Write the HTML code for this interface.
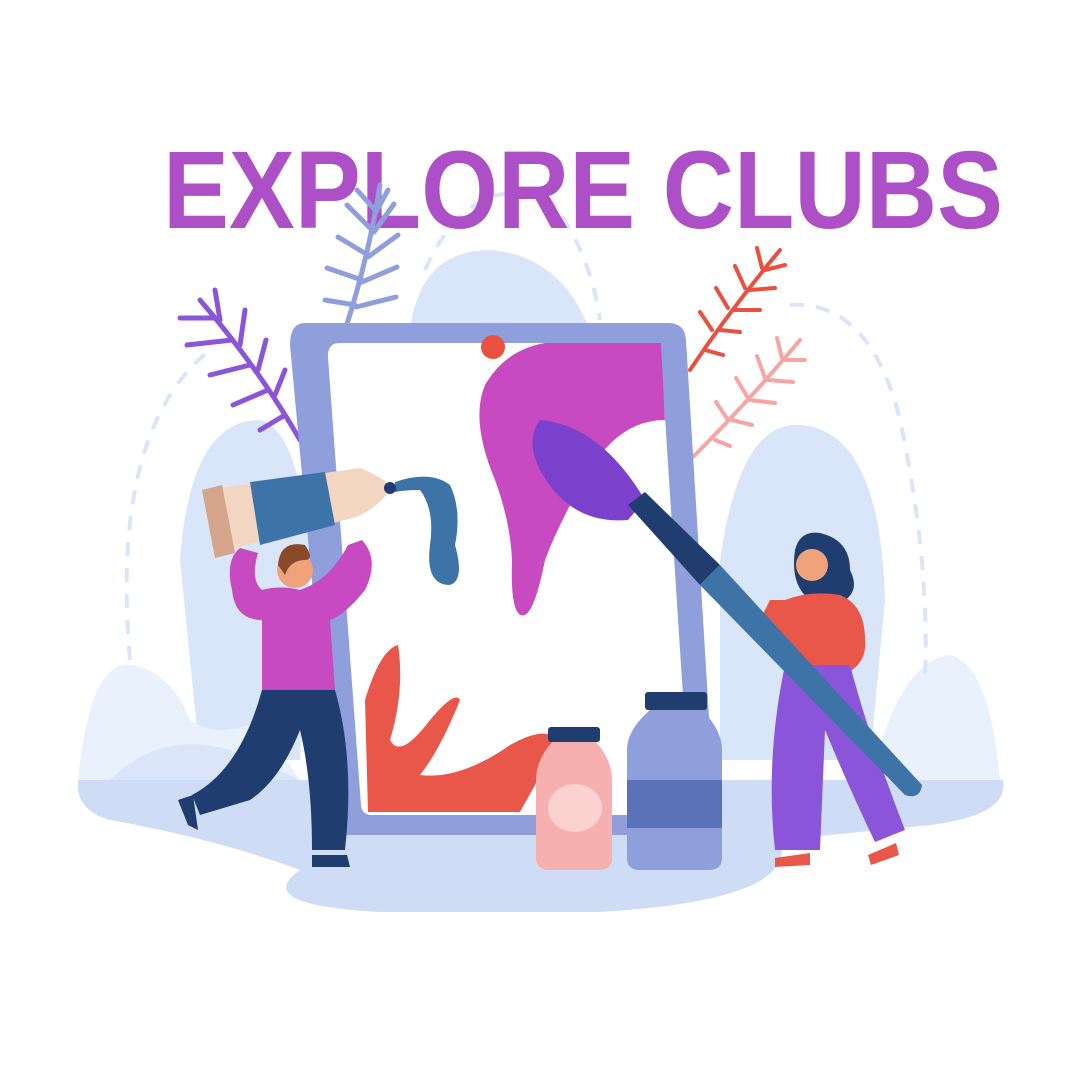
<!DOCTYPE html>
<html><head><meta charset="utf-8"><style>html,body{margin:0;padding:0;background:#fff}svg{display:block}</style></head>
<body>
<svg width="1080" height="1080" viewBox="0 0 1080 1080" xmlns="http://www.w3.org/2000/svg">
<rect width="1080" height="1080" fill="#fff"/>
<!-- background hills -->
<path d="M410 330 Q420 250 490 250 Q560 255 590 330 Z" fill="#d9e6fa"/>
<path d="M180 560 Q190 420 260 420 Q300 430 310 560 L300 760 L200 760 Z" fill="#d9e6fa"/>
<path d="M720 560 Q740 420 800 425 Q880 430 885 600 L870 760 L720 760 Z" fill="#d9e6fa"/>
<path d="M78 780 Q90 660 130 665 Q170 670 190 720 Q220 740 260 720 L300 780 Z" fill="#e9f1fc"/>
<path d="M870 780 Q900 660 950 655 Q990 665 1000 780 Z" fill="#e9f1fc"/>
<path d="M110 780 Q160 730 230 750 Q280 770 300 780 Z" fill="#dbe5f9"/>
<!-- dashed arcs -->
<path d="M130 660 Q110 430 210 350" fill="none" stroke="#dbe5f9" stroke-width="4" stroke-dasharray="14 12"/>
<path d="M425 270 Q470 170 550 200 Q590 250 600 320" fill="none" stroke="#dbe5f9" stroke-width="4" stroke-dasharray="14 12"/>
<path d="M790 305 Q870 300 900 420 Q930 560 925 680" fill="none" stroke="#dbe5f9" stroke-width="4" stroke-dasharray="14 12"/>
<!-- ground -->
<path d="M78 780 L1003 780 Q1010 815 930 825 L780 840 Q800 900 600 912 L380 912 Q250 905 300 870 Q220 840 110 820 Q75 810 78 780 Z" fill="#cfdcf6"/>
<text x="583" y="228" text-anchor="middle" textLength="840" lengthAdjust="spacingAndGlyphs" font-family="Liberation Sans, sans-serif" font-weight="bold" font-size="110" fill="#ad4fc6">EXPLORE CLUBS</text>
<!-- leaves -->
<g stroke="#8e9fdc" stroke-width="5" fill="none" stroke-linecap="round">
<path d="M380 185 Q368 260 345 330"/>
<path d="M375 210 l-18 -20 M372 230 l-25 -25 M368 255 l-30 -18 M362 280 l-35 -12 M355 305 l-30 -5 M376 212 l12 -22 M374 232 l20 -28 M368 257 l30 -22 M362 282 l35 -15 M356 307 l40 -10"/>
</g>
<g stroke="#8a55d8" stroke-width="5" fill="none" stroke-linecap="round">
<path d="M200 300 Q260 370 300 440"/>
<path d="M215 318 l-35 0 M232 340 l-45 5 M250 365 l-40 10 M268 390 l-35 15 M285 415 l-25 15 M220 320 l-5 -30 M240 345 l5 -35 M258 370 l8 -30 M275 395 l10 -25"/>
</g>
<g stroke="#e8503f" stroke-width="4" fill="none" stroke-linecap="round">
<path d="M780 250 Q730 310 690 370"/>
<path d="M765 270 l20 -5 M750 290 l25 -2 M735 310 l25 0 M720 330 l20 2 M705 350 l18 5 M762 268 l-5 -20 M745 288 l-10 -22 M728 308 l-12 -20 M712 330 l-12 -18"/>
</g>
<g stroke="#f6a5a5" stroke-width="4" fill="none" stroke-linecap="round">
<path d="M800 340 Q750 400 690 460"/>
<path d="M785 360 l20 0 M768 380 l25 2 M750 400 l25 3 M732 420 l20 5 M715 440 l15 6 M782 358 l-5 -20 M765 378 l-8 -22 M748 398 l-12 -20 M728 420 l-12 -18"/>
</g>
<!-- tablet -->
<path d="M305 323 L668 323 Q685 323 686 340 L715 815 Q716 835 698 835 L350 835 Q335 835 334 820 L290 345 Q290 323 305 323 Z" fill="#8e9fdc"/>
<path d="M340 343 L648 343 Q660 343 661 355 L690 805 Q690 815 680 815 L372 815 Q362 815 361 805 L328 358 Q327 343 340 343 Z" fill="#fff"/>
<circle cx="493" cy="347" r="12" fill="#e8503f"/>
<path d="M545 343 L661 343 L665 420 Q620 420 590 470 Q560 520 545 560 Q535 610 525 615 Q510 620 512 560 Q510 520 495 480 Q470 420 485 385 Q505 350 545 343 Z" fill="#c74ac0"/>
<path d="M365 700 Q380 650 398 645 Q405 690 390 740 Q400 760 430 720 Q455 690 460 700 Q440 750 420 775 Q460 780 510 745 Q545 725 560 740 L520 812 L368 812 Z" fill="#e8574a"/>
<path d="M395 482 Q430 470 450 485 Q462 510 455 545 Q465 580 450 585 Q425 585 430 545 Q435 510 420 490 Q405 490 395 492 Z" fill="#3e73a8"/>
<path d="M205 490 L360 468 Q385 478 392 488 Q372 515 345 520 L215 553 Z" fill="#f3d6c2"/>
<path d="M250 482 L325 472 L335 525 L260 545 Z" fill="#3e73a8"/>
<path d="M202 490 L222 485 L235 553 L215 558 Z" fill="#d4a58a"/>
<circle cx="390" cy="488" r="6" fill="#1f3d6e"/>
<!-- man -->
<path d="M232 590 Q225 560 240 548 L258 553 Q250 580 262 590 Q280 585 300 590 Q330 580 348 545 L362 540 Q380 560 365 590 Q345 615 330 620 L335 690 L262 690 L262 620 Q235 620 232 590 Z" fill="#c74ac0"/>
<path d="M262 690 L335 690 Q355 760 345 850 L312 850 Q312 780 300 730 Q280 780 250 800 L200 815 L192 795 Q240 770 262 690 Z" fill="#1f3d6e"/>
<path d="M178 800 l15 -5 l5 35 l-10 -5 Z M312 855 l35 0 l3 12 l-38 0 Z" fill="#1f3d6e"/>
<circle cx="295" cy="570" r="18" fill="#f0a37a"/>
<path d="M278 565 Q280 540 305 545 Q315 560 305 560 Q290 560 285 575 Z" fill="#8a4a2a"/>
<!-- jars -->
<rect x="548" y="727" width="52" height="15" rx="3" fill="#1f3d6e"/>
<path d="M552 742 L596 742 Q612 760 612 780 L612 858 Q612 870 598 870 L550 870 Q536 870 536 858 L536 780 Q536 760 552 742 Z" fill="#f6b0b0"/>
<ellipse cx="575" cy="808" rx="27" ry="24" fill="#fbd2d0"/>
<rect x="645" y="692" width="62" height="18" rx="3" fill="#1f3d6e"/>
<path d="M650 710 L702 710 Q722 730 722 750 L722 858 Q722 870 708 870 L640 870 Q627 870 627 858 L627 750 Q627 730 650 710 Z" fill="#8e9fdc"/>
<rect x="627" y="780" width="95" height="48" fill="#5a72b8"/>
<!-- woman -->
<path d="M795 550 Q800 530 820 533 Q850 540 850 570 Q860 590 845 600 L810 600 Q790 585 795 550 Z" fill="#1f3d6e"/>
<circle cx="812" cy="565" r="16" fill="#f0a37a"/>
<path d="M785 600 Q810 590 840 595 Q865 605 865 640 Q868 670 830 680 L832 690 L790 690 L788 640 Q770 630 760 620 L770 600 Z" fill="#e8574a"/>
<path d="M785 665 L850 665 Q870 740 905 830 L875 842 Q850 790 825 730 L820 850 L775 850 Q765 760 785 665 Z" fill="#8a55d8"/>
<path d="M775 858 l35 -5 l0 12 l-35 2 Z M868 855 l28 -12 l3 12 l-28 10 Z" fill="#e8574a"/>
<!-- brush -->
<path d="M540 420 Q600 425 645 500 L628 520 Q570 525 540 470 Q525 440 540 420 Z" fill="#7b40cc"/>
<path d="M628 505 L645 492 L720 565 L700 585 Z" fill="#1f3d6e"/>
<path d="M700 585 L720 565 L922 785 Q920 800 905 795 Z" fill="#3e73a8"/>
</svg>
</body></html>
